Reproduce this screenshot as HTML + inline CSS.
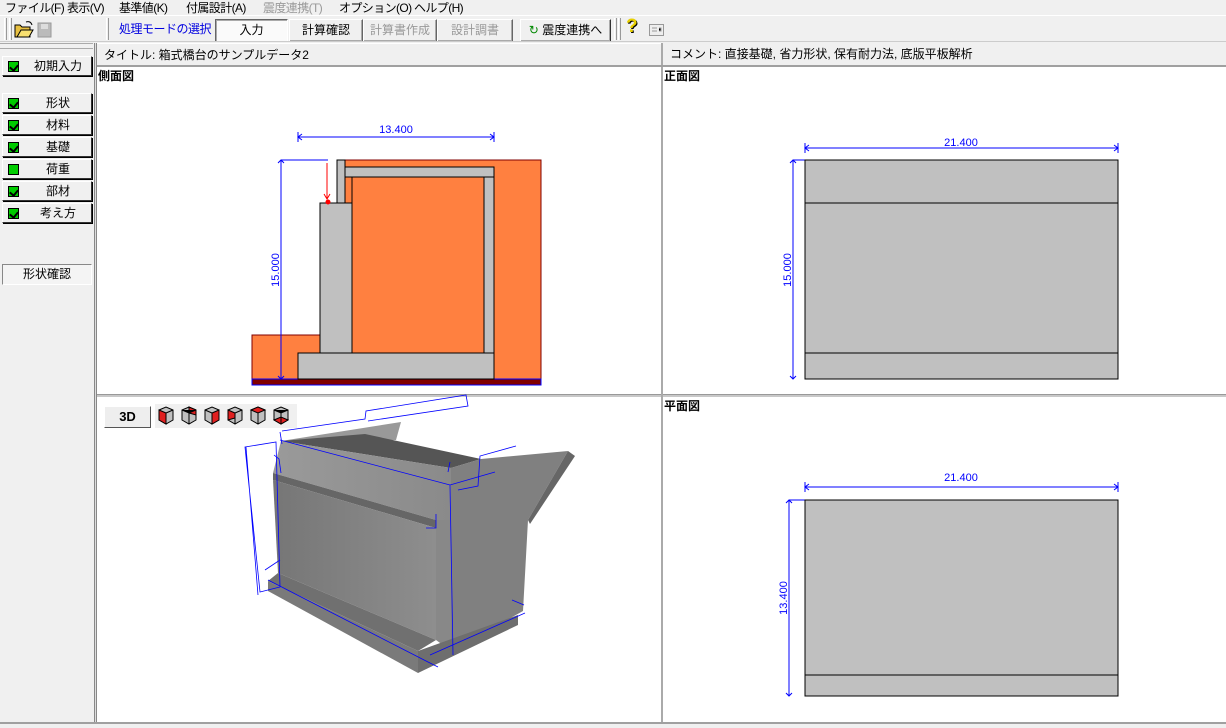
<!DOCTYPE html>
<html><head><meta charset="utf-8"><style>
*{margin:0;padding:0;box-sizing:border-box}
body{width:1226px;height:728px;overflow:hidden;background:#f0f0f0;font-family:"Liberation Sans","Noto Sans CJK JP",sans-serif;font-size:12px;color:#000;position:relative}
.a{position:absolute}
.menu span{position:absolute;top:-1px;font-size:12px;letter-spacing:-0.6px}
.tb{position:absolute;top:19px;height:23px;border:1px solid;border-color:#fff #666 #666 #fff;box-shadow:inset -1px -1px 0 #aaa;text-align:center;line-height:21px;font-size:12px;background:#f0f0f0}
.lb{position:absolute;left:2px;width:90px;height:20px;border:1px solid;border-color:#fff #333 #333 #fff;box-shadow:1px 1px 0 #000;background:#f0f0f0;font-size:12px;line-height:18px}
.lb i{position:absolute;left:5px;top:4px;width:11px;height:11px;background:#0c0;border:1px solid #000}
.lb i.c::after{content:"";position:absolute;left:2px;top:1px;width:4px;height:6px;border-right:2px solid #000;border-bottom:2px solid #000;transform:rotate(40deg)}
.lb b{font-weight:normal;position:absolute;left:22px;right:0;text-align:center}
.pane{position:absolute;background:#fff}
.lbl{position:absolute;font-weight:bold;font-size:12px}
</style></head><body>
<div class="menu">
<span style="left:5px">ファイル(F)</span><span style="left:67px">表示(V)</span><span style="left:119px">基準値(K)</span><span style="left:186px">付属設計(A)</span><span style="left:263px;color:#999">震度連携(T)</span><span style="left:339px">オプション(O)</span><span style="left:414px">ヘルプ(H)</span>
</div>
<div class="a" style="left:0;top:15px;width:1226px;height:1px;background:#fff"></div>
<div class="a" style="left:4px;top:18px;width:3px;height:22px;border-left:1px solid #fff;border-right:1px solid #999"></div>
<div class="a" style="left:9px;top:18px;width:3px;height:22px;border-left:1px solid #fff;border-right:1px solid #999"></div>
<svg class="a" style="left:14px;top:20px" width="40" height="20"><path d="M1 5h5l2 2h8v10H1z" fill="#e8c040" stroke="#000"/><path d="M3 17l4-7h12l-4 7z" fill="#f8e070" stroke="#000"/><path d="M12 2c3-1 5 0 6 3" stroke="#000" fill="none"/><rect x="24" y="3" width="13" height="14" fill="#bbb" stroke="#999"/><rect x="27" y="4" width="7" height="5" fill="#ddd"/></svg>
<div class="a" style="left:106px;top:18px;width:3px;height:22px;border-left:1px solid #fff;border-right:1px solid #999"></div>
<div class="a" style="left:119px;top:20px;color:#0000e0;font-size:12px;letter-spacing:-0.5px">処理モードの選択</div>
<div class="tb" style="left:215px;width:73px;background:#fafafa;border-color:#666 #fff #fff #666;box-shadow:inset 1px 1px 0 #aaa">入力</div>
<div class="tb" style="left:289px;width:74px">計算確認</div>
<div class="tb" style="left:363px;width:74px;color:#999">計算書作成</div>
<div class="tb" style="left:437px;width:76px;color:#999">設計調書</div>
<div class="tb" style="left:520px;width:91px;border-color:#fff #333 #333 #fff"><span style="color:#080">↻</span> 震度連携へ</div>
<div class="a" style="left:614px;top:18px;width:3px;height:22px;border-left:1px solid #fff;border-right:1px solid #999"></div>
<div class="a" style="left:618px;top:18px;width:3px;height:22px;border-left:1px solid #fff;border-right:1px solid #999"></div>
<div class="a" style="left:626px;top:16px;font-size:19px;font-weight:bold;color:#e8d000;text-shadow:1px 1px 0 #000">?</div>
<svg class="a" style="left:649px;top:24px" width="16" height="13"><rect x="0.5" y="0.5" width="14" height="11" fill="#eee" stroke="#999"/><path d="M3 4h5M3 7h5M10 4h2v3h-2" stroke="#999"/></svg>
<div class="a" style="left:0;top:41px;width:1226px;height:1px;background:#ccc"></div>
<div class="a" style="left:97px;top:43px;width:564px;height:22px;border-top:1px solid #fff;line-height:22px;padding-left:7px">タイトル: 箱式橋台のサンプルデータ2</div>
<div class="a" style="left:661px;top:43px;width:2px;height:23px;background:#aaa"></div>
<div class="a" style="left:663px;top:43px;width:563px;height:22px;line-height:22px;padding-left:7px">コメント: 直接基礎, 省力形状, 保有耐力法, 底版平板解析</div>
<div class="a" style="left:97px;top:65px;width:1129px;height:2px;background:#a0a0a0"></div>
<div class="a" style="left:0;top:43px;width:93px;height:6px;border-top:1px solid #aaa;border-bottom:1px solid #aaa"></div>
<div class="lb" style="top:56px"><i class="c"></i><b>初期入力</b></div>
<div class="lb" style="top:93px"><i class="c"></i><b>形状</b></div>
<div class="lb" style="top:115px"><i class="c"></i><b>材料</b></div>
<div class="lb" style="top:137px"><i class="c"></i><b>基礎</b></div>
<div class="lb" style="top:159px"><i></i><b>荷重</b></div>
<div class="lb" style="top:181px"><i class="c"></i><b>部材</b></div>
<div class="lb" style="top:203px"><i class="c"></i><b>考え方</b></div>
<div class="a" style="left:2px;top:264px;width:90px;height:21px;border:1px solid;border-color:#888 #fff #fff #888;background:#f4f4f4;text-align:center;line-height:19px">形状確認</div>
<div class="a" style="left:94px;top:43px;width:3px;height:679px;border-left:1px solid #888;border-right:1px solid #888;background:#ddd"></div>
<div class="pane" style="left:97px;top:67px;width:564px;height:327px"></div>
<div class="pane" style="left:663px;top:67px;width:563px;height:327px"></div>
<div class="pane" style="left:97px;top:397px;width:564px;height:325px"></div>
<div class="pane" style="left:663px;top:397px;width:563px;height:325px"></div>
<div class="a" style="left:97px;top:394px;width:1129px;height:3px;background:#c8c8c8;border-top:1px solid #999"></div>
<div class="a" style="left:661px;top:67px;width:2px;height:655px;background:#aaa"></div>
<div class="a" style="left:0;top:722px;width:1226px;height:6px;border-top:2px solid #a0a0a0;background:#f0f0f0"></div>
<div class="lbl" style="left:98px;top:67px">側面図</div>
<div class="lbl" style="left:664px;top:67px">正面図</div>
<div class="lbl" style="left:664px;top:397px">平面図</div>
<svg class="a" style="left:0;top:0" width="1226" height="728" font-family="Liberation Sans" font-size="11">
<rect x="252" y="335" width="70" height="44" fill="#ff8040" stroke="#800000"/>
<rect x="345" y="160" width="196" height="219" fill="#ff8040" stroke="#800000"/>
<rect x="252" y="379" width="289" height="6" fill="#800000" stroke="#0000ff"/>
<rect x="298" y="353" width="196" height="26" fill="#c0c0c0" stroke="#000"/>
<rect x="320" y="203" width="32" height="150" fill="#c0c0c0" stroke="#000"/>
<rect x="337" y="160" width="8" height="43" fill="#c0c0c0" stroke="#000"/>
<rect x="345" y="167" width="149" height="10" fill="#c0c0c0" stroke="#000"/>
<rect x="484" y="177" width="10" height="176" fill="#c0c0c0" stroke="#000"/>
<rect x="352" y="177" width="132" height="176" fill="#ff8040" stroke="#000"/>
<line x1="327" y1="163" x2="327" y2="198" stroke="#f00"/><path d="M324 194l3 5 3-5" fill="none" stroke="#f00"/><circle cx="328" cy="202" r="2.5" fill="#f00"/>
<g stroke="#0000ff" fill="none"><path d="M298 137h196M298 132v10M494 132v10M302 134l-4 3 4 3M490 134l4 3-4 3"/>
<path d="M281 160v219M281 160h47M278 163l3-3 3 3M278 376l3 3 3-3"/>
<path d="M793 160v219M793 160h12M790 163l3-3 3 3M790 376l3 3 3-3M805 148h313M805 143v10M1118 143v10M809 145l-4 3 4 3M1114 145l4 3-4 3"/>
<path d="M789 500v196M789 500h16M786 503l3-3 3 3M786 693l3 3 3-3M805 487h313M805 482v10M1118 482v10M809 484l-4 3 4 3M1114 484l4 3-4 3"/></g>
<g fill="#0000ff"><text x="396" y="133" text-anchor="middle">13.400</text><text x="961" y="146" text-anchor="middle">21.400</text><text x="961" y="481" text-anchor="middle">21.400</text>
<text transform="translate(279,270) rotate(-90)" text-anchor="middle">15.000</text><text transform="translate(791,270) rotate(-90)" text-anchor="middle">15.000</text><text transform="translate(787,598) rotate(-90)" text-anchor="middle">13.400</text></g>
<rect x="805" y="160" width="313" height="219" fill="#c0c0c0" stroke="#000"/><path d="M805 203h313M805 353h313" stroke="#000"/>
<rect x="805" y="500" width="313" height="196" fill="#c0c0c0" stroke="#000"/><path d="M805 675h313" stroke="#000"/>
<defs><linearGradient id="g1" x1="0" x2="1"><stop offset="0" stop-color="#767676"/><stop offset="1" stop-color="#8e8e8e"/></linearGradient>
<linearGradient id="g2" x1="0" x2="1"><stop offset="0" stop-color="#9a9a9a"/><stop offset="1" stop-color="#8a8a8a"/></linearGradient></defs>
<polygon points="281,441 401,422 396,440" fill="#999"/>
<polygon points="281,441 365,434 481,459 451,468" fill="#555"/>
<polygon points="281,441 451,468 451,520 436,520 273,473" fill="url(#g2)"/>
<polygon points="451,468 481,459 568,451 528,520 523,611 451,651" fill="#808080"/>
<polygon points="568,451 575,456 530,524 528,520" fill="#666"/>
<polygon points="273,473 436,520 436,528 273,480" fill="#666"/>
<polygon points="436,520 451,520 451,651 436,640" fill="#888"/>
<polygon points="273,480 436,528 436,640 278,573" fill="url(#g1)"/>
<polygon points="268,581 278,573 436,640 418,651" fill="#707070"/>
<polygon points="268,581 418,651 418,673 268,591" fill="#7a7a7a"/>
<polygon points="418,651 518,615 518,625 418,673" fill="#6e6e6e"/>
<g stroke="#0000ff" fill="none" stroke-width="0.8"><path d="M245 447l31-5 4 145-20 5zM282 431l83-12 1-8 100-16 2 11-100 15M246 447l12 148M280 440l170 45 45-13M450 485l3 170M458 490l20-4 2-30 36-10M282 444l-2-12M436 514v14h-10M265 570l15-10M268 580l160 82 10 5M430 655l95-42M512 600l12 5M450 462l-2 10M274 455l5 4 2 14"/></g>
</svg>
<div class="a" style="left:104px;top:406px;width:47px;height:22px;border:1px solid;border-color:#fff #555 #555 #fff;background:#eee;text-align:center;line-height:20px;font-weight:bold;font-size:13px">3D</div>
<div class="a" style="left:155px;top:404px;width:142px;height:24px;background:#f0f0f0"></div>
<svg class="a" style="left:157px;top:405px" width="140" height="20">
<g stroke="#000" stroke-width="1">
<g transform="translate(1,1)"><path d="M1 4l7-3 7 3v10l-7 4-7-4z" fill="#c0c0c0"/><path d="M1 4l7 3v11l-7-4z" fill="#e02020"/><path d="M8 7l7-3M8 7v11"/></g>
<g transform="translate(24,1)"><path d="M1 4l7-3 7 3v10l-7 4-7-4z" fill="#c0c0c0"/><path d="M8 1l7 3v5l-7-2z" fill="#e02020"/><path d="M1 4l7 3 7-3M8 7v11"/></g>
<g transform="translate(47,1)"><path d="M1 4l7-3 7 3v10l-7 4-7-4z" fill="#c0c0c0"/><path d="M8 7l7-3v10l-7 4z" fill="#e02020"/><path d="M1 4l7 3"/></g>
<g transform="translate(70,1)"><path d="M1 4l7-3 7 3v10l-7 4-7-4z" fill="#c0c0c0"/><path d="M1 4l7 3v5l-7 2z" fill="#e02020"/><path d="M8 7l7-3M8 7v11"/></g>
<g transform="translate(93,1)"><path d="M1 4l7-3 7 3v10l-7 4-7-4z" fill="#c0c0c0"/><path d="M1 4l7-3 7 3-7 3z" fill="#e02020"/><path d="M8 7v11"/></g>
<g transform="translate(116,1)"><path d="M1 4l7-3 7 3v10l-7 4-7-4z" fill="#c0c0c0"/><path d="M1 14l7-3 7 3-7 4z" fill="#e02020"/><path d="M1 4l7 3 7-3M8 7v11"/></g>
</g></svg>
</body></html>
